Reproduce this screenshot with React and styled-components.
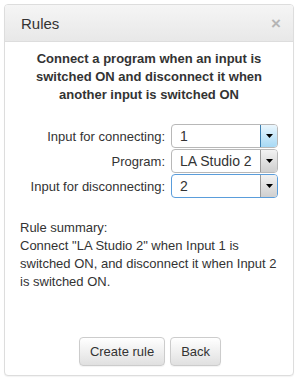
import React from "react";
import styled, { createGlobalStyle } from "styled-components";

const Global = createGlobalStyle`
  html, body { margin: 0; padding: 0; background: #fff; }
  body { font-family: "Liberation Sans", Arial, sans-serif; color: #333; }
`;

const Panel = styled.div`
  margin: 4px;
  width: 290px;
  height: 372px;
  box-sizing: border-box;
  border: 1px solid #ddd;
  border-radius: 4px;
  box-shadow: 0 1px 1px rgba(0,0,0,0.05);
  display: flex;
  flex-direction: column;
  background: #fff;
`;

const Header = styled.div`
  height: 37px;
  box-sizing: border-box;
  display: flex;
  align-items: center;
  justify-content: space-between;
  padding: 0 12px 0 16px;
  background: linear-gradient(#f5f5f5, #e8e8e8);
  border-bottom: 1px solid #ddd;
  border-radius: 3px 3px 0 0;
`;

const Title = styled.div`
  font-size: 15px;
  color: #333;
`;

const Close = styled.span`
  font-size: 17px;
  font-weight: bold;
  color: #b5b5b5;
  line-height: 1;
`;

const Body = styled.div`
  flex: 1;
  display: flex;
  flex-direction: column;
  padding: 8px 10px 0 10px;
`;

const Heading = styled.div`
  font-size: 13px;
  font-weight: bold;
  text-align: center;
  line-height: 18px;
`;

const Form = styled.div`
  display: grid;
  grid-template-columns: 1fr 107px;
  column-gap: 6px;
  row-gap: 1px;
  margin-top: 20px;
  padding-right: 5px;
  align-items: center;
`;

const Label = styled.div`
  font-size: 13px;
  text-align: right;
  white-space: nowrap;
`;

const Select = styled.div`
  height: 24px;
  box-sizing: border-box;
  border: 1px solid ${(p) => (p.$focus ? "#5a9ddb" : "#b8b8b8")};
  border-radius: 4px;
  display: flex;
  align-items: stretch;
  overflow: hidden;
  background: #fff;
`;

const SelectText = styled.div`
  flex: 1;
  font-size: 14px;
  padding-left: 8px;
  display: flex;
  align-items: center;
  white-space: nowrap;
`;

const Arrow = styled.div`
  width: 16px;
  border-left: 1px solid ${(p) => (p.$hover ? "#3c7fb1" : "#9a9a9a")};
  background: ${(p) =>
    p.$hover
      ? "linear-gradient(#eaf6fd, #a7d9f5)"
      : "linear-gradient(#f2f2f2, #cfcfcf)"};
  display: flex;
  align-items: center;
  justify-content: center;
`;

const Summary = styled.div`
  margin-top: 21px;
  font-size: 13px;
  line-height: 18px;
  padding-left: 5px;
`;

const Buttons = styled.div`
  margin-top: auto;
  margin-bottom: 9px;
  display: flex;
  justify-content: center;
  gap: 5px;
  padding-left: 2px;
`;

const Button = styled.button`
  height: 29px;
  padding: 0 10px;
  font-family: "Liberation Sans", Arial, sans-serif;
  font-size: 13px;
  color: #333;
  border: 1px solid #ccc;
  border-radius: 4px;
  background: linear-gradient(#fff, #e0e0e0);
  box-shadow: 0 1px 1px rgba(0,0,0,0.05);
`;

const Tri = () => (
  <svg width="7" height="4" viewBox="0 0 7 4">
    <path d="M0 0H7L3.5 4Z" fill="#000" />
  </svg>
);

const Dropdown = ({ value, focus, hover }) => (
  <Select $focus={focus}>
    <SelectText>{value}</SelectText>
    <Arrow $hover={hover}>
      <Tri />
    </Arrow>
  </Select>
);

export default function App() {
  return (
    <>
      <Global />
      <Panel>
        <Header>
          <Title>Rules</Title>
          <Close>×</Close>
        </Header>
        <Body>
          <Heading>
            Connect a program when an input is switched ON and disconnect it
            when another input is switched ON
          </Heading>
          <Form>
            <Label>Input for connecting:</Label>
            <Dropdown value="1" hover />
            <Label>Program:</Label>
            <Dropdown value="LA Studio 2" />
            <Label>Input for disconnecting:</Label>
            <Dropdown value="2" focus />
          </Form>
          <Summary>
            Rule summary:
            <br />
            Connect "LA Studio 2" when Input 1 is switched ON, and disconnect it
            when Input 2 is switched ON.
          </Summary>
          <Buttons>
            <Button>Create rule</Button>
            <Button>Back</Button>
          </Buttons>
        </Body>
      </Panel>
    </>
  );
}
